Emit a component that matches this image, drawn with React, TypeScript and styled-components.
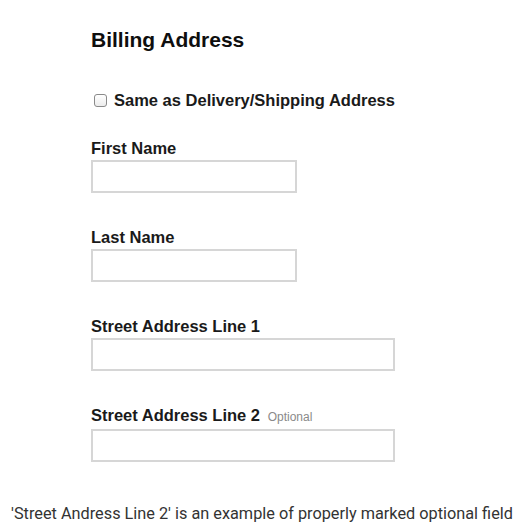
import React from "react";
import styled, { createGlobalStyle } from "styled-components";

const GlobalStyle = createGlobalStyle`
  html, body {
    margin: 0;
    padding: 0;
    background: #ffffff;
  }
  * { box-sizing: border-box; }
`;

const Page = styled.div`
  width: 524px;
  height: 530px;
  display: flex;
  flex-direction: column;
  background: #ffffff;
  overflow: hidden;
`;

const Form = styled.div`
  display: flex;
  flex-direction: column;
  padding: 28px 0 0 91px;
  font-family: "Liberation Sans", Arial, Helvetica, sans-serif;
  color: #1a1a1a;
`;

const Heading = styled.h2`
  margin: 0;
  font-size: 21px;
  line-height: 24px;
  font-weight: 700;
  color: #0e0e0e;
`;

const CheckRow = styled.label`
  margin-top: 38px;
  display: flex;
  align-items: center;
  gap: 7px;
  font-size: 16.5px;
  line-height: 20px;
  font-weight: 700;
  color: #1a1a1a;
`;

const CheckBox = styled.span`
  width: 13px;
  height: 13px;
  margin-left: 3px;
  border: 1px solid #8a8a8a;
  border-radius: 3px;
  background: linear-gradient(#ffffff, #ececec);
  flex: none;
`;

const Fields = styled.div`
  margin-top: 28px;
  display: flex;
  flex-direction: column;
  gap: 34px;
`;

const Field = styled.div`
  display: flex;
  flex-direction: column;
`;

const Label = styled.div`
  font-size: 16.5px;
  line-height: 21px;
  font-weight: 700;
  margin-bottom: 1px;
  color: #1a1a1a;
  white-space: nowrap;
`;

const Optional = styled.span`
  font-size: 12px;
  font-weight: 400;
  color: #8a8a8a;
  margin-left: 3px;
`;

const Input = styled.div<{ $w: number }>`
  width: ${(p) => p.$w}px;
  height: 33px;
  border: 2px solid #d6d6d6;
  background: #fff;
`;

const Caption = styled.p`
  margin: 41.5px 0 0;
  text-align: center;
  font-family: Roboto, "Noto Sans", sans-serif;
  font-size: 16.3px;
  line-height: 20px;
  color: #333333;
  white-space: nowrap;
`;

export default function App() {
  return (
    <Page>
      <GlobalStyle />
      <Form>
        <Heading>Billing Address</Heading>
        <CheckRow>
          <CheckBox />
          Same as Delivery/Shipping Address
        </CheckRow>
        <Fields>
          <Field>
            <Label>First Name</Label>
            <Input $w={206} />
          </Field>
          <Field>
            <Label>Last Name</Label>
            <Input $w={206} />
          </Field>
          <Field>
            <Label>Street Address Line 1</Label>
            <Input $w={304} />
          </Field>
          <Field>
            <Label>
              Street Address Line 2 <Optional>Optional</Optional>
            </Label>
            <Input $w={304} />
          </Field>
        </Fields>
      </Form>
      <Caption>'Street Andress Line 2' is an example of properly marked optional field</Caption>
    </Page>
  );
}
